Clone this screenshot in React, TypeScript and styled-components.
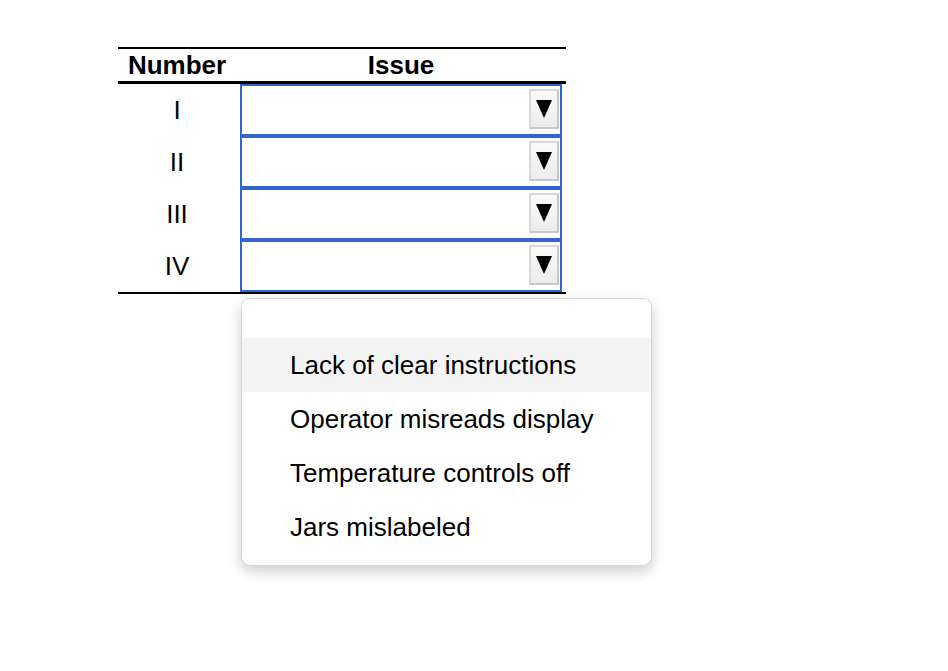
import React from 'react';
import styled, { createGlobalStyle } from 'styled-components';

const GlobalStyle = createGlobalStyle`
  html, body {
    margin: 0;
    padding: 0;
    background: #ffffff;
  }

  body {
    font-family: 'Liberation Sans', Arial, Helvetica, sans-serif;
    color: #000000;
  }
`;

const Page = styled.div`
  box-sizing: border-box;
  min-height: 100vh;
  padding: 47px 0 40px 118px;
`;

const Table = styled.div`
  width: 448px;
  display: grid;
  grid-template-columns: 118px 1fr;
  border-top: 2px solid #000000;
  border-bottom: 2px solid #000000;
`;

const HeaderCell = styled.div`
  height: 32px;
  display: flex;
  align-items: center;
  justify-content: center;
  font-size: 26px;
  font-weight: 700;
  border-bottom: 3px solid #000000;
`;

const NumberCell = styled.div`
  height: 52px;
  display: flex;
  align-items: center;
  justify-content: center;
  font-size: 26px;
`;

const IssueCell = styled.div`
  padding: 0 4px;
`;

const SelectBox = styled.div`
  box-sizing: border-box;
  height: 52px;
  border: 2px solid #3366cc;
  display: flex;
  align-items: center;
  justify-content: flex-end;
  padding-right: 1px;
`;

const ArrowButton = styled.div`
  box-sizing: border-box;
  width: 30px;
  height: 40px;
  margin-top: -3px;
  border: 2px solid #c8c8c8;
  border-top-color: #d8d8d8;
  border-left-color: #d8d8d8;
  background: linear-gradient(#fafafa, #ececec);
  display: flex;
  align-items: center;
  justify-content: center;
`;

const MenuWrap = styled.div`
  padding: 4px 0 0 123px;
`;

const Menu = styled.div`
  box-sizing: border-box;
  width: 411px;
  background: #ffffff;
  border: 1px solid #d6d6d6;
  border-radius: 9px;
  box-shadow: 0 5px 14px rgba(0, 0, 0, 0.2);
  padding-bottom: 11px;
  overflow: hidden;
`;

const Option = styled.div<{ $active?: boolean; $empty?: boolean }>`
  height: ${(p) => (p.$empty ? 39 : 54)}px;
  display: flex;
  align-items: center;
  padding-left: 48px;
  font-size: 26px;
  background: ${(p) => (p.$active ? '#f4f4f4' : '#ffffff')};
`;

const rows = ['I', 'II', 'III', 'IV'];

const options = [
  'Lack of clear instructions',
  'Operator misreads display',
  'Temperature controls off',
  'Jars mislabeled',
];

const Arrow = () => (
  <svg width="16" height="18" viewBox="0 0 16 18">
    <path d="M0 0 H16 L8 18 Z" fill="#000000" />
  </svg>
);

const App: React.FC = () => {
  return (
    <Page>
      <GlobalStyle />
      <Table>
        <HeaderCell>Number</HeaderCell>
        <HeaderCell>Issue</HeaderCell>
        {rows.map((row) => (
          <React.Fragment key={row}>
            <NumberCell>{row}</NumberCell>
            <IssueCell>
              <SelectBox>
                <ArrowButton>
                  <Arrow />
                </ArrowButton>
              </SelectBox>
            </IssueCell>
          </React.Fragment>
        ))}
      </Table>
      <MenuWrap>
        <Menu>
          <Option $empty />
          {options.map((option, i) => (
            <Option key={option} $active={i === 0}>
              {option}
            </Option>
          ))}
        </Menu>
      </MenuWrap>
    </Page>
  );
};

export default App;
